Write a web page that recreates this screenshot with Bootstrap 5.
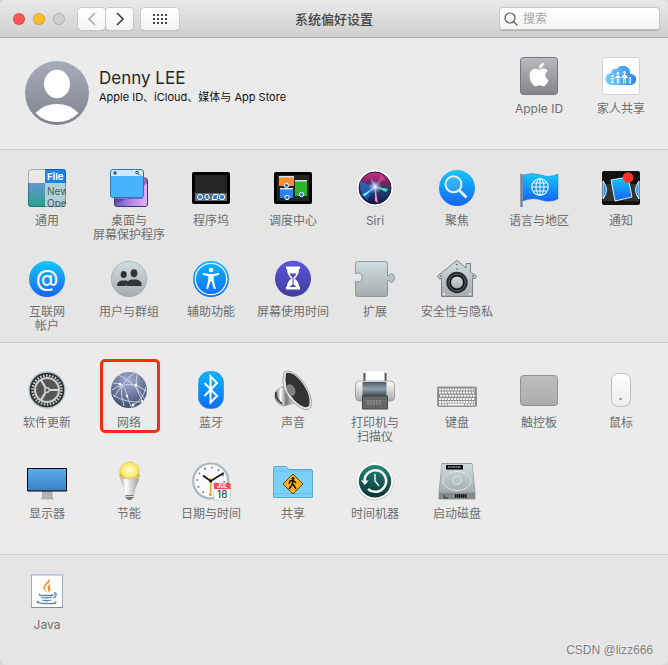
<!DOCTYPE html>
<html lang="zh-CN">
<head>
<meta charset="utf-8">
<meta name="viewport" content="width=device-width, initial-scale=1">
<title>系统偏好设置</title>
<link href="https://cdn.jsdelivr.net/npm/bootstrap@5.3.0/dist/css/bootstrap.min.css" rel="stylesheet">
<style>
body{font-family:Inter,"Noto Sans CJK SC",sans-serif;font-size:12px;line-height:14px;background:#d8d8d8;color:#262626}
.window{background:#e5e5e5;border-radius:6px;overflow:hidden}
.titlebar{display:grid;grid-template-columns:1fr auto 1fr;height:38px;padding:0 8px;background:linear-gradient(#e9e9e9,#cfcfcf);border-bottom:1px solid #a9a9a9}
.titlebar h1{font-size:13px;line-height:18px;color:#444}
.lights{margin:0 13px 0 5px}
.light{width:12px;height:12px;border-radius:50%;border:1px solid #0002;padding:0}
.light-close{background:#fc5753}
.light-min{background:#fdbc2e}
.light-zoom{background:#cfcfcf}
.tool{height:22px;padding:0;border:0;border-radius:4px;background:linear-gradient(#fff,#f4f4f4);box-shadow:0 0 0 1px #c8c8c8,0 1px 1px #999;color:#555;display:flex;align-items:center;justify-content:center}
.tool-nav{width:27px}
.tool-grid{width:38px}
.nav-pair{gap:1px}
.search{width:161px;height:23px;border-radius:4px;background:linear-gradient(#fff,#f4f4f4);box-shadow:inset 0 0 0 1px #c6c6c6,0 1px 0 #aaa;color:#555}
.search input{font-size:12px;color:#333}
.search input::placeholder{color:#a5a5a5}
.pane{border-bottom:1px solid #cbcbcb;padding:18px 6px 9px}
.pane-light{background:#ebebeb}
.pane-hardware{padding-top:27px;padding-bottom:19px}
.pane-other{padding-top:17px;border-bottom:0}
.pane-account{padding-bottom:19px}
.tiles{display:grid;grid-template-columns:repeat(8,minmax(0,1fr));row-gap:17px}
.tile{display:flex;flex-direction:column;align-items:center;gap:6px;padding:0;border:0;background:none;color:#6e6e6e;position:relative;white-space:nowrap}
.tile svg{width:40px;height:40px;display:block;flex:none}
.tile span{min-height:28px}
.account{grid-column:span 6;display:flex;gap:10px;padding:5px 0 0 19px;border:0;background:none;text-align:left}
.account svg{width:64px;height:64px;flex:none}
.account span{padding-top:6px}
.account strong{font-weight:400;font-size:17px;line-height:22px;color:#262626}
.account small{font-size:11px;line-height:16px;color:#111}
.marked::after{content:"";position:absolute;inset:-11px 10px 11px 12px;border:3px solid #fa2b10;border-radius:5px}
.credit{right:15px;bottom:7px;font-family:"Liberation Sans",sans-serif;font-size:12px;line-height:16px;color:#808080;text-shadow:-1px -1px 0 #fff9}
</style>
<script src="https://cdn.jsdelivr.net/npm/bootstrap@5.3.0/dist/js/bootstrap.bundle.min.js"></script>
</head>
<body>
<svg width="0" height="0" class="position-absolute" aria-hidden="true">
<defs>
<linearGradient id="sky" x2="0" y2="1"><stop stop-color="#14c8fb"/><stop offset="1" stop-color="#1663f2"/></linearGradient>
<linearGradient id="azure" x2="0" y2="1"><stop stop-color="#11b5fd"/><stop offset="1" stop-color="#0a6df5"/></linearGradient>
<linearGradient id="steel" x2="0" y2="1"><stop stop-color="#cfdde1"/><stop offset="1" stop-color="#a5acae"/></linearGradient>
<linearGradient id="silver" x2="0" y2="1"><stop stop-color="#fff"/><stop offset="1" stop-color="#a9a9ab"/></linearGradient>
<linearGradient id="grey" x2="0" y2="1"><stop stop-color="#b9bac0"/><stop offset="1" stop-color="#858489"/></linearGradient>
</defs>
</svg>
<div class="window d-flex flex-column min-vh-100 position-relative">
<header class="titlebar align-items-center">
  <div class="d-flex align-items-center">
    <div class="lights d-flex gap-2">
      <button class="light light-close" aria-label="关闭"></button>
      <button class="light light-min" aria-label="最小化"></button>
      <button class="light light-zoom" aria-label="缩放" disabled></button>
    </div>
    <div class="nav-pair d-flex">
      <button class="tool tool-nav" aria-label="后退"><svg width="10" height="14" fill="none" stroke="#a5a5a5" stroke-width="1.5"><path d="M8 1 2 7l6 6"/></svg></button>
      <button class="tool tool-nav" aria-label="前进"><svg width="10" height="14" fill="none" stroke="#444" stroke-width="1.7"><path d="m2 1 6 6-6 6"/></svg></button>
    </div>
    <button class="tool tool-grid ms-2" aria-label="显示全部"><svg width="16" height="12" stroke="#444" stroke-width="2" stroke-dasharray="2 2"><path d="M1 2h14M1 6h14M1 10h14"/></svg></button>
  </div>
  <h1 class="m-0 fw-medium">系统偏好设置</h1>
  <label class="search d-flex align-items-center ms-auto ps-1">
    <svg width="16" height="16" fill="none" stroke="currentColor" stroke-width="1.2" class="flex-shrink-0"><circle cx="7" cy="7" r="5"/><path d="m10.7 10.7 3.8 3.8"/></svg>
    <input type="search" class="border-0 bg-transparent p-0 ms-1 w-100" placeholder="搜索" aria-label="搜索">
  </label>
</header>

<section class="pane pane-light pane-account">
<div class="tiles">
  <button class="account">
    <svg viewBox="0 0 64 64"><defs><linearGradient id="av" x2="0" y2="1"><stop stop-color="#a6acba"/><stop offset="1" stop-color="#7f838e"/></linearGradient></defs><circle cx="32" cy="32" r="32" fill="url(#av)"/><ellipse cx="32" cy="23" rx="13" ry="14.3" fill="#fff"/><path d="M10.500 52Q19 43 32 43t21.500 9Q45 61 32 61t-21.500-9Z" fill="#fff"/></svg>
    <span class="d-flex flex-column"><strong>Denny LEE</strong><small>Apple ID、iCloud、媒体与 App Store</small></span>
  </button>
  <button class="tile"><svg viewBox="0 0 40 40"><rect x="1.500" y="1.500" width="37" height="37" rx="3" fill="url(#grey)" stroke="#77777b"/><path transform="translate(8.400 7) scale(1.450)" fill="#fff" d="M11.182.008C11.148-.03 9.923.023 8.857 1.180c-1.066 1.156-.902 2.482-.878 2.516.024.034 1.520.087 2.475-1.258.955-1.345.762-2.391.728-2.430Zm3.314 11.733c-.048-.096-2.325-1.234-2.113-3.422.212-2.189 1.675-2.789 1.698-2.854.023-.065-.597-.790-1.254-1.157a3.692 3.692 0 0 0-1.563-.434c-.108-.003-.483-.095-1.254.116-.508.139-1.653.589-1.968.607-.316.018-1.256-.522-2.267-.665-.647-.125-1.333.131-1.824.328-.490.196-1.422.754-2.074 2.237-.652 1.482-.311 3.830-.067 4.560.244.729.625 1.924 1.273 2.796.576.984 1.340 1.667 1.659 1.899.319.232 1.219.386 1.843.067.502-.308 1.408-.485 1.766-.472.357.013 1.061.154 1.782.539.571.197 1.111.115 1.652-.105.541-.221 1.324-1.059 2.238-2.758.347-.790.505-1.217.473-1.282Z"/></svg><span>Apple ID</span></button>
  <button class="tile"><svg viewBox="0 0 40 40"><defs><linearGradient id="cl"><stop stop-color="#76d2fa"/><stop offset="1" stop-color="#2d86f5"/></linearGradient></defs><rect x="1.500" y="1.500" width="37" height="37" rx="3" fill="#fff" stroke="#cfcfcf"/><path d="M11 29a6 6 0 0 1-1-12c0-3 3-5 6-4 2-4.500 11-4.500 13 2 0 1 .5 2 .3 3 8 0 7.700 11 0 11Z" fill="url(#cl)"/><g fill="#fff" stroke="#fff" stroke-width=".9"><circle cx="11.500" cy="20" r=".8"/><path d="M11.500 22v3M9.500 22.500h4M10.800 25v2.500M12.200 25v2.500"/><circle cx="17" cy="17.500" r=".9"/><path d="M17 19v5M14.500 22l1.500-2h2l1.500 2M16.300 23v4.500M17.700 23v4.500"/><circle cx="23.500" cy="16.500" r="1"/><path d="M23.500 18v5M20.500 21.500l2-2.500h2l2 3M22.700 22v5.500M24.300 22v5.500"/><circle cx="29" cy="22" r=".7"/><path d="M29 24v2M27.500 24h3M28.500 26v1.500M29.500 26v1.500"/></g></svg><span>家人共享</span></button>
</div>
</section>

<section class="pane">
<div class="tiles">
  <button class="tile"><svg viewBox="0 0 40 40"><defs><linearGradient id="gn" x2="0" y2="1"><stop stop-color="#6596ce"/><stop offset="1" stop-color="#25a28d"/></linearGradient><clipPath id="gc"><rect x="1" y="1" width="38" height="38" rx="3"/></clipPath></defs><g clip-path="url(#gc)"><path fill="#e8e8e9" d="M0 0h18v15H0z"/><path fill="url(#gn)" d="M0 15h18v25H0z"/><path fill="#1a86ec" d="M18 0h22v15H18z"/><path fill="#b1d0d5" d="M18 15h22v25H18z"/><text x="20" y="12" font-size="9.500" font-weight="700" fill="#fff">File</text><g font-size="10" fill="#4a5b60"><text x="20" y="27">New</text><text x="20" y="39">Ope</text></g></g><rect x="1.500" y="1.500" width="37" height="37" rx="3" fill="none" stroke="#0004"/></svg><span>通用</span></button>
  <button class="tile"><svg viewBox="0 0 40 40"><defs><linearGradient id="dk" x2="1" y2="0"><stop stop-color="#5c5ac2"/><stop offset=".5" stop-color="#b486e8"/><stop offset="1" stop-color="#e5b0f5"/></linearGradient></defs><rect x="5.500" y="10" width="33" height="28.500" rx="2.500" fill="url(#dk)" stroke="#41356f"/><path d="M6 35q14-2 32-20v-4h-4v20H6Z" fill="#482b8a" opacity=".5"/><rect x="1.500" y="1.500" width="33" height="28" rx="2.500" fill="#47b2fd" stroke="#3576a9"/><path d="M2 8V4q0-2 2-2h28q2 0 2 2v4Z" fill="#cdeafd"/><circle cx="6" cy="5" r="1.700" fill="#456"/><circle cx="28" cy="4.500" r="1.300" fill="none" stroke="#345"/><path d="m29 5.500 2 2" stroke="#345"/></svg><span>桌面与<br>屏幕保护程序</span></button>
  <button class="tile"><svg viewBox="0 0 40 40"><rect x="1" y="4" width="38" height="32" rx="2"/><path fill="#252525" d="M4 7h32v18H4z"/><path fill="#686868" d="M4 25h32v8H4z"/><g fill="#1685e5" stroke="#fff" stroke-width="1"><circle cx="9" cy="29" r="2.600"/><ellipse cx="16" cy="29" rx="2.200" ry="2.700"/><path d="M22.500 26.500h4.500l-1 5h-5Z"/><circle cx="31" cy="29" r="2.700"/></g></svg><span>程序坞</span></button>
  <button class="tile"><svg viewBox="0 0 40 40"><rect x="1" y="4" width="38" height="32" rx="2"/><path fill="#242424" d="M4 7h32v26H4z"/><path fill="#f58c32" d="M6 8h15v10H6z"/><path fill="#2e84ee" d="M7 20h13v10H7z"/><path fill="#2ab727" d="M22 12h12v16H22z"/><path d="M6 8.700h15M7 20.700h13M22 12.700h12" stroke="#ddd" stroke-width="1.500"/><g fill="#187ee5" stroke="#fff" stroke-width="1"><circle cx="13.500" cy="17.500" r="2.200"/><circle cx="14" cy="29.500" r="2.200"/><circle cx="28.500" cy="26.500" r="2.200"/></g></svg><span>调度中心</span></button>
  <button class="tile"><svg viewBox="0 0 40 40"><defs><linearGradient id="si" x2="0" y2="1"><stop stop-color="#e02984"/><stop offset=".35" stop-color="#68295e"/><stop offset=".7" stop-color="#173a70"/><stop offset="1" stop-color="#15133c"/></linearGradient><radialGradient id="sg"><stop stop-color="#fff"/><stop offset="1" stop-color="#80b8ff" stop-opacity="0"/></radialGradient></defs><circle cx="20" cy="20.500" r="18.500" fill="#bbb"/><circle cx="20" cy="20" r="18.300" fill="#fff"/><circle cx="20" cy="20" r="16" fill="url(#si)" stroke="#191740"/><path d="M20 19 5 13Q4 26 12 32Z" fill="#236ac4" opacity=".75"/><path d="m20 19-13 8 3 1Z" fill="#7ef5fa"/><path d="m18 18 15 3-2 3Z" fill="#41e3b8"/><path d="m20 18 3 17-3-2Z" fill="#f68bcc"/><path d="m15 9 7 9-3 2Z" fill="#9275d5"/><path d="m21 18 5-11 4 4Z" fill="#d54f91" opacity=".7"/><circle cx="20" cy="19" r="7" fill="url(#sg)"/></svg><span>Siri</span></button>
  <button class="tile"><svg viewBox="0 0 40 40"><circle cx="20" cy="20" r="18" fill="url(#sky)"/><circle cx="16.500" cy="16.300" r="8" fill="#fff2" stroke="#e8eff5" stroke-width="2"/><path d="m22.500 22.500 7 7" stroke="#e8eff5" stroke-width="2.800"/></svg><span>聚焦</span></button>
  <button class="tile"><svg viewBox="0 0 40 40"><path d="M2.500 6v33" stroke="#777f9b" stroke-width="2.500"/><path d="M4 7q9-3 18 0t17-1v25q-8 4-17 1t-18 1Z" fill="url(#sky)" stroke="#2480c5" stroke-width=".5"/><g fill="none" stroke="#e9f8ff" stroke-width="1.100"><circle cx="21" cy="19" r="8.300"/><ellipse cx="21" cy="19" rx="4" ry="8.300"/><path d="M21 11v16M13 19h16M14.500 15h13M14.500 23h13"/></g></svg><span>语言与地区</span></button>
  <button class="tile"><svg viewBox="0 0 40 40"><rect x="1" y="3" width="38" height="34" rx="2" fill="#111"/><path d="M2 16h36v17H2z" fill="#333"/><path d="M2 13q7 9 0 18Zm36 0q-7 9 0 18Z" fill="#1599ff" stroke="#e5edf2"/><path d="m10 12 17-3 4 20-17 4Z" fill="url(#sky)" stroke="#e3edf4"/><circle cx="27" cy="9.500" r="5.300" fill="#ff3529"/></svg><span>通知</span></button>

  <button class="tile"><svg viewBox="0 0 40 40"><circle cx="20" cy="20" r="18" fill="url(#sky)"/><text x="20" y="27" text-anchor="middle" font-size="23" font-weight="500" fill="#f4f4f4">@</text></svg><span>互联网<br>帐户</span></button>
  <button class="tile"><svg viewBox="0 0 40 40"><circle cx="20" cy="20" r="17.700" fill="url(#steel)" stroke="#929b9e" stroke-width=".6"/><g fill="#333"><ellipse cx="14.700" cy="15.500" rx="3" ry="3.500"/><path d="M8.300 27v-2q0-2 4-3.500h5l2 1-3 4.500Z"/><ellipse cx="25" cy="14.300" rx="3.400" ry="4"/><path d="M17.500 27v-2q0-3 5-4.500h5q5 1.500 5 4.500v2Z"/></g></svg><span>用户与群组</span></button>
  <button class="tile"><svg viewBox="0 0 40 40"><circle cx="20" cy="20" r="18" fill="url(#azure)"/><circle cx="20" cy="20" r="15.700" fill="none" stroke="#fff" stroke-width="1.300"/><g fill="#fff"><circle cx="20" cy="11" r="2.300"/><path d="m12 14 6 1h4l6-1 .3 1.800-5.500 1.500v4l2 8.500-1.800.5-2.500-8h-1l-2.500 8-1.800-.5 2-8.500v-4l-5.500-1.500Z"/></g></svg><span>辅助功能</span></button>
  <button class="tile"><svg viewBox="0 0 40 40"><defs><linearGradient id="st" x2="0" y2="1"><stop stop-color="#5d57da"/><stop offset="1" stop-color="#413c9d"/></linearGradient></defs><circle cx="20" cy="19.700" r="18" fill="url(#st)"/><path d="M13 7.500h14v2.500h-1q0 6-4.500 9.500 4.500 3 4.500 8h1v3H13v-3h1q0-5 4.500-8Q14 16 14 10h-1Z" fill="#fff"/><path d="M16.500 14.500h7q-1 2.500-3 4v7l3 2.500h-7l3-2.500v-7q-2-1.500-3-4Z" fill="#5149b8"/></svg><span>屏幕使用时间</span></button>
  <button class="tile"><svg viewBox="0 0 40 40"><path d="M2.500 2.500h28q2 0 2 2v12h2q0-2 2.500-2 2.500 1 2.500 4.500t-2.500 4.500q-2.500 0-2.500-2h-2v14q0 2-2 2h-28q-2 0-2-2v-13h1.500q5 2 5-4t-5-4H.5v-10q0-2 2-2Z" fill="url(#steel)" stroke="#7d8b8e" stroke-width=".8"/></svg><span>扩展</span></button>
  <button class="tile"><svg viewBox="0 0 40 40"><path d="M20 1.500 29 9V4.500h4.500V13l6 4-2 3-2-1v18.500h-31V19l-2 1-2-3Z" fill="url(#steel)" stroke="#798184"/><circle cx="20" cy="23.500" r="10.700" fill="#292b2c"/><circle cx="20" cy="23.500" r="8.200" fill="#111" stroke="#606566"/><circle cx="20" cy="23.500" r="6" fill="url(#steel)"/><g fill="#555"><circle cx="20" cy="5.500" r=".8"/><circle cx="4" cy="17" r=".8"/><circle cx="36" cy="17" r=".8"/><circle cx="20" cy="10" r=".8"/></g><g fill="#fff"><circle cx="7" cy="35" r="1"/><circle cx="33" cy="35" r="1"/></g></svg><span>安全性与隐私</span></button>
</div>
</section>

<section class="pane pane-light pane-hardware">
<div class="tiles">
  <button class="tile"><svg viewBox="0 0 40 40"><circle cx="20" cy="20" r="18" fill="#2c2c2c" stroke="#b7c5cb" stroke-width="1.300"/><circle cx="20" cy="20" r="14.500" fill="none" stroke="#c8cbcc" stroke-width="2.500" stroke-dasharray="1.600 1.437"/><circle cx="20" cy="20" r="12" fill="#555" stroke="#d1d1d1" stroke-width="2"/><path d="M20 20h11M20 20l-6-10M20 20l-6 10" stroke="#d6d6d6" stroke-width="2.200"/><circle cx="20" cy="20" r="3" fill="#ccc"/><circle cx="20" cy="20" r="1.500" fill="#555"/></svg><span>软件更新</span></button>
  <button class="tile marked"><svg viewBox="0 0 40 40"><defs><radialGradient id="nw" cy=".25" r=".8"><stop stop-color="#a2afd2"/><stop offset="1" stop-color="#3c4869"/></radialGradient><clipPath id="nc"><circle cx="20" cy="20" r="18"/></clipPath></defs><circle cx="20" cy="20" r="18" fill="url(#nw)"/><g clip-path="url(#nc)" fill="none" stroke="#dce6fa" stroke-width=".8"><path d="M3 20q9-7 24-5l12 7M4 13q11 0 13 9t6 16M27 2q-8 5-13 12L5 27M28 5q-3 12 5 25M10 5q15 7 27 26M13 14q-2 10 2 22M24 35q10-5 13-18M4 25q12 8 30 7"/></g><g fill="#fff"><circle cx="11" cy="14" r="1.300"/><circle cx="27" cy="15" r="1.300"/><circle cx="18" cy="26" r="1.200"/><circle cx="24" cy="35" r="1.500"/><circle cx="33" cy="31" r="1.200"/></g></svg><span>网络</span></button>
  <button class="tile"><svg viewBox="0 0 40 40"><rect x="7.500" y="1.500" width="25" height="37" rx="11" fill="url(#azure)" stroke="#258ccc" stroke-width=".6"/><path d="m13.500 13 12.500 13-6.500 6.500v-26L26 13 13.500 26" fill="none" stroke="#fff" stroke-width="2"/></svg><span>蓝牙</span></button>
  <button class="tile"><svg viewBox="0 0 40 40"><defs><linearGradient id="sp"><stop stop-color="#555"/><stop offset=".3" stop-color="#fff"/><stop offset=".6" stop-color="#777"/><stop offset="1" stop-color="#ddd"/></linearGradient></defs><path d="M7 18q-6 3-5 10 3 8 9 8l10-3-5-20Z" fill="url(#sp)" stroke="#777" stroke-width=".5"/><path d="M3 22q-1 6 6 12" fill="none" stroke="#444" stroke-width="2"/><path d="M11 2q6-4 17 7 13 17 10 28-5 7-17-4Q6 19 11 2Z" fill="#e9e9e9" stroke="#888" stroke-width=".7"/><path d="M13 3q6-2 14 7 12 15 9 26-5 4-15-6Q10 18 13 3Z" fill="#333"/><ellipse cx="18" cy="20" rx="4" ry="6" transform="rotate(-25 18 20)" fill="#828282"/></svg><span>声音</span></button>
  <button class="tile"><svg viewBox="0 0 40 40"><defs><linearGradient id="pr" x2="0" y2="1"><stop stop-color="#4e5b66"/><stop offset=".5" stop-color="#8ea0ae"/><stop offset="1" stop-color="#3e4750"/></linearGradient></defs><path d="M8.500 3h23v12h-23Z" fill="#4d4d4d"/><path d="M10.500.5h19V13h-19Z" fill="#fff" stroke="#d2d2d2" stroke-width=".5"/><rect x=".5" y="11" width="39" height="20" rx="4" fill="url(#silver)" stroke="#888" stroke-width=".7"/><path d="M7.500 12h24v14h-24Z" fill="url(#pr)"/><path d="M7.500 26h25v13h-25Z" fill="#666" stroke="#444"/><path d="M8 31h24" stroke="#777"/><path d="M13 30v5M16 30v5M19 30v5M22 30v5M25 30v5" stroke="#999"/></svg><span>打印机与<br>扫描仪</span></button>
  <button class="tile"><svg viewBox="0 0 40 40"><rect x=".5" y="17" width="39" height="19.500" rx="1" fill="#8c8c8c" stroke="#949494"/><g stroke="#f5f5f5" stroke-width="2"><path d="M2 19.500h36M2 32h36" stroke-dasharray="2 .7"/><path d="M2 22.500h36M3 25.700h35M2 28.900h36" stroke-dasharray="2.200 .8"/><path d="M2 34.500h36" stroke-dasharray="2.300 .7 2.300 .7 2.300 .7 16 .7"/></g></svg><span>键盘</span></button>
  <button class="tile"><svg viewBox="0 0 40 40"><defs><linearGradient id="tp" x2="0" y2="1"><stop stop-color="#bebebe"/><stop offset="1" stop-color="#adadad"/></linearGradient></defs><rect x="1.500" y="5.500" width="37" height="30" rx="3" fill="url(#tp)" stroke="#929292"/></svg><span>触控板</span></button>
  <button class="tile"><svg viewBox="0 0 40 40"><defs><linearGradient id="ms" x2="0" y2="1"><stop stop-color="#fff"/><stop offset="1" stop-color="#ececec"/></linearGradient></defs><rect x="10.500" y="3.500" width="19" height="33" rx="7" fill="url(#ms)" stroke="#bebebe"/><circle cx="19.700" cy="29" r="1.300" fill="#999"/></svg><span>鼠标</span></button>

  <button class="tile"><svg viewBox="0 0 40 40"><defs><linearGradient id="di" x2="0" y2="1"><stop stop-color="#58aff2"/><stop offset="1" stop-color="#397fc1"/></linearGradient></defs><path fill="#b5b5b5" stroke="#888" stroke-width=".5" d="M15.500 30h9.500v6l1.500 2h-12l1-2Z"/><path fill="url(#di)" stroke="#000" d="M.5 7.500h39v22.500H.5Z"/></svg><span>显示器</span></button>
  <button class="tile"><svg viewBox="0 0 40 40"><defs><radialGradient id="bu"><stop stop-color="#fffed2"/><stop offset=".8" stop-color="#fce974"/><stop offset="1" stop-color="#eabb3b"/></radialGradient><linearGradient id="bb"><stop stop-color="#999"/><stop offset=".3" stop-color="#fff"/><stop offset="1" stop-color="#999"/></linearGradient></defs><path d="M10.700 14q1 7 4 13l2 8h8l2-8q3-6 4-13Z" fill="url(#bb)"/><path d="M10.500 16.500V10.500a10 10 0 0 1 20 0v6q-10 3-20 0Z" fill="url(#bu)"/><path d="M10.500 16.500q10 3 20 0" fill="none" stroke="#ccc"/><path d="M16.500 34h8v3l-3 2h-2l-3-2Z" fill="#777"/><path d="M16.500 35.500h8" stroke="#ddd"/></svg><span>节能</span></button>
  <button class="tile"><svg viewBox="0 0 40 40"><circle cx="19.700" cy="20" r="17.500" fill="#fafafa" stroke="#a8b9bf" stroke-width="2.200"/><circle cx="19.700" cy="20" r="13.500" fill="none" stroke="#777" stroke-width="2" stroke-dasharray="1.500 5.569"/><path d="M19.700 20 12 14.500M19.700 20l13-8" stroke="#111" stroke-width="1.700"/><path d="M19.700 17v18" stroke="#f6a222" stroke-width="1.500"/><circle cx="19.700" cy="20" r="1.500"/><path d="M23 22h16.500v17H23Z" fill="#fff" stroke="#aaa" stroke-width=".5"/><path d="M23 22h16.500v6H23Z" fill="#e4524c"/><text x="31.200" y="27" text-anchor="middle" font-size="5.500" font-weight="700" fill="#fff">JUL</text><text x="31.200" y="36.800" text-anchor="middle" font-size="10" fill="#222">18</text></svg><span>日期与时间</span></button>
  <button class="tile"><svg viewBox="0 0 40 40"><path d="M.5 7q0-1.500 1.500-1.500h11l3 3h22q1.500 0 1.500 1.500v26.500H.5Z" fill="#7bd0f5" stroke="#5ca7ca"/><path d="M1 10h38M1 32.500h38" stroke="#5bb7e4" opacity=".6"/><path d="m20 13 10 10-10 10-10-10Z" fill="#ffb319" stroke="#54430f"/><circle cx="20" cy="17.500" r="1.400"/><path d="m20 19-1 5-3 4M20 23l3 5M16 23l1-3 3-1 3 3" fill="none" stroke="#111" stroke-width="1.500"/></svg><span>共享</span></button>
  <button class="tile"><svg viewBox="0 0 40 40"><defs><linearGradient id="tm" x2="0" y2="1"><stop stop-color="#238678"/><stop offset="1" stop-color="#0c3234"/></linearGradient></defs><circle cx="20" cy="20.700" r="18.500" fill="#bbb"/><circle cx="20" cy="20.200" r="18.200" fill="#fff"/><circle cx="20" cy="20.200" r="16.200" fill="url(#tm)"/><path d="M9.500 20A10.800 10.800 0 1 1 13 28" fill="none" stroke="#f1f5f5" stroke-width="2.500"/><path d="M6 19.500h7.500l-3.700 4.500Z" fill="#fff"/><path d="M20 13v7l4 5" fill="none" stroke="#eee" stroke-width="1.500"/></svg><span>时间机器</span></button>
  <button class="tile"><svg viewBox="0 0 40 40"><path d="M5 2.500h30l3 29v6.500H2v-6.500Z" fill="#aeb8bc" stroke="#7d8589" stroke-width=".7"/><path d="M5 3h30l2.500 28h-35Z" fill="url(#steel)"/><path d="M2 31.500h36V38H2Z" fill="#858b8d"/><path d="M9 4h17v4.500H9Z"/><path d="M11 6h13" stroke="#999" stroke-width="1.300" stroke-dasharray="2 .5"/><ellipse cx="20" cy="20" rx="14" ry="9.500" fill="none" stroke="#e0e9eb"/><ellipse cx="20" cy="19.500" rx="4.500" ry="4" fill="#b9c4c7" stroke="#e5ecee" stroke-width=".8"/><path d="M18 35h12" stroke="#111" stroke-width="3.500" stroke-dasharray="1.500 .5"/><path d="M7 34v3h4" fill="none" stroke="#333"/></svg><span>启动磁盘</span></button>
</div>
</section>

<section class="pane pane-other flex-grow-1">
<div class="tiles">
  <button class="tile"><svg viewBox="0 0 40 40"><path d="M4.500 3h31v32.500h-31Z" fill="#fff" stroke="#9eacba"/><path d="M4 35.500h32" stroke="#788da2"/><path d="M22 7q2 3-2 5.500t-1 6.500l2 2q-7-4-3.500-8T22 7Zm2 5q-5 2-3 5 1 2-1 4 5-3 3-5-1-2 1-4Z" fill="#ed9026"/><g fill="none" stroke="#5c83a7" stroke-width="1.300"><path d="M13 22q-3 1.500 6 1.500t8-1M14 25q5 2 11 0M15 28q5 1.500 9 0M27 21q4 0 1 4l-2 1M12 29q-6 2 7 2.500t9-2"/></g></svg><span>Java</span></button>
</div>
</section>
<div class="credit position-absolute">CSDN @lizz666</div>
</div>
</body>
</html>
